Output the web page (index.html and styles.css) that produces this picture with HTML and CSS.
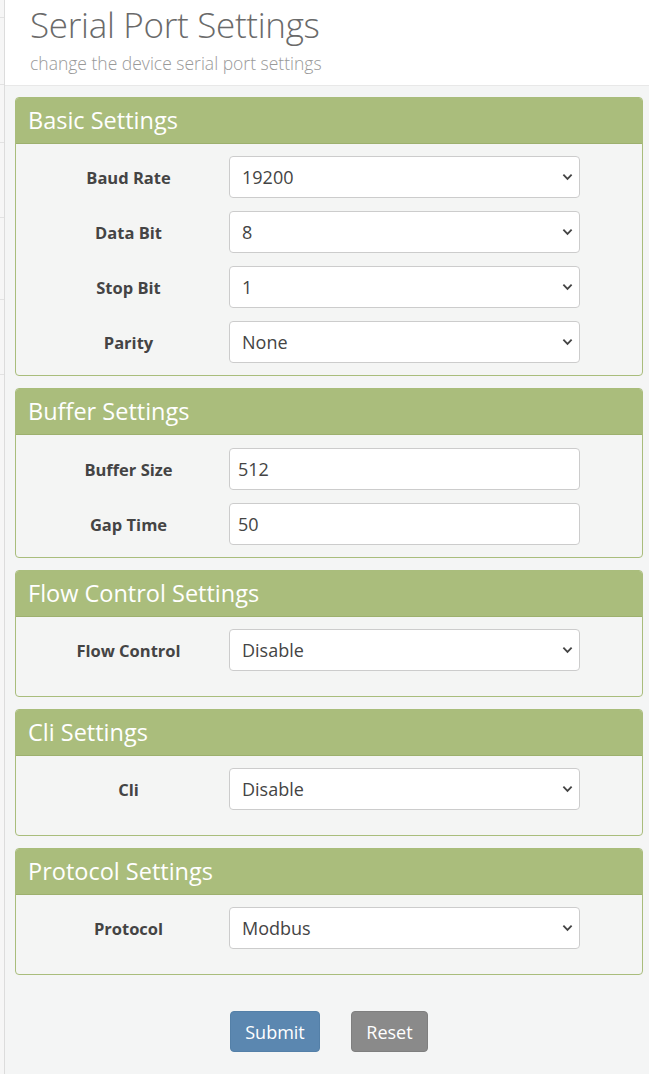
FILE: index.html
```html
<!DOCTYPE html>
<html lang="en">
<head>
<meta charset="utf-8">
<title>Serial Port Settings</title>
<link rel="stylesheet" href="styles.css">
</head>
<body>
<div class="layout">
  <aside class="sidebar">
    <div class="side-item s1"></div>
    <div class="side-item s2"></div>
    <div class="side-item s3"></div>
    <div class="side-item s4"></div>
    <div class="side-item s5"></div>
    <div class="side-item s6"></div>
  </aside>
  <main class="main">
    <header class="page-header">
      <h1 class="title">Serial Port Settings</h1>
      <p class="subtitle">change the device serial port settings</p>
    </header>
    <form class="content">
      <section class="panel">
        <h2 class="panel-heading">Basic Settings</h2>
        <div class="panel-body">
          <div class="row"><label class="label">Baud Rate</label><div class="select-wrap"><select class="control"><option>19200</option></select><svg class="chev" viewBox="0 0 12 8"><path d="M1.5 1.5 6 6 10.5 1.5"/></svg></div></div>
          <div class="row"><label class="label">Data Bit</label><div class="select-wrap"><select class="control"><option>8</option></select><svg class="chev" viewBox="0 0 12 8"><path d="M1.5 1.5 6 6 10.5 1.5"/></svg></div></div>
          <div class="row"><label class="label">Stop Bit</label><div class="select-wrap"><select class="control"><option>1</option></select><svg class="chev" viewBox="0 0 12 8"><path d="M1.5 1.5 6 6 10.5 1.5"/></svg></div></div>
          <div class="row"><label class="label">Parity</label><div class="select-wrap"><select class="control"><option>None</option></select><svg class="chev" viewBox="0 0 12 8"><path d="M1.5 1.5 6 6 10.5 1.5"/></svg></div></div>
        </div>
      </section>
      <section class="panel">
        <h2 class="panel-heading">Buffer Settings</h2>
        <div class="panel-body inputs">
          <div class="row"><label class="label">Buffer Size</label><input class="control input" type="text" value="512"></div>
          <div class="row"><label class="label">Gap Time</label><input class="control input" type="text" value="50"></div>
        </div>
      </section>
      <section class="panel">
        <h2 class="panel-heading">Flow Control Settings</h2>
        <div class="panel-body tall">
          <div class="row"><label class="label">Flow Control</label><div class="select-wrap"><select class="control"><option>Disable</option></select><svg class="chev" viewBox="0 0 12 8"><path d="M1.5 1.5 6 6 10.5 1.5"/></svg></div></div>
        </div>
      </section>
      <section class="panel">
        <h2 class="panel-heading">Cli Settings</h2>
        <div class="panel-body tall">
          <div class="row"><label class="label">Cli</label><div class="select-wrap"><select class="control"><option>Disable</option></select><svg class="chev" viewBox="0 0 12 8"><path d="M1.5 1.5 6 6 10.5 1.5"/></svg></div></div>
        </div>
      </section>
      <section class="panel">
        <h2 class="panel-heading">Protocol Settings</h2>
        <div class="panel-body tall">
          <div class="row"><label class="label">Protocol</label><div class="select-wrap"><select class="control"><option>Modbus</option></select><svg class="chev" viewBox="0 0 12 8"><path d="M1.5 1.5 6 6 10.5 1.5"/></svg></div></div>
        </div>
      </section>
      <div class="actions">
        <button type="button" class="btn btn-primary">Submit</button>
        <button type="button" class="btn btn-default">Reset</button>
      </div>
    </form>
  </main>
</div>
</body>
</html>
```
FILE: styles.css
```css
* { box-sizing: border-box; }
html, body { margin: 0; padding: 0; }
body {
  background: #f4f5f5;
  font-family: "Open Sans", "Noto Sans", sans-serif;
  color: #333;
}
.layout { display: flex; min-height: 1074px; }
.sidebar {
  width: 5px;
  flex: none;
  background: #f6f6f6;
  border-right: 1px solid #dcdcdc;
  display: flex;
  flex-direction: column;
}
.side-item { border-bottom: 1px solid #e2e2e2; }
.s1 { height: 18px; }
.s2 { height: 67px; }
.s3 { height: 58px; }
.s4 { height: 75px; }
.s5 { height: 82px; }
.s6 { height: 75px; }
.main { flex: 1; min-width: 0; }
.page-header {
  background: #fff;
  border-bottom: 1px solid #e8e8e8;
  padding: 3px 0 0 25px;
  height: 86px;
}
.title {
  margin: 0;
  font-size: 35px;
  font-weight: 300;
  line-height: 44px;
  color: #6a6a6a;
  letter-spacing: -0.3px;
}
.subtitle {
  margin: 4px 0 0 0;
  font-size: 17.5px;
  font-weight: 300;
  color: #999;
  line-height: 24px;
}
.content { padding: 11px 6px 0 10px; }
.panel {
  border: 1px solid #a9bd7c;
  border-radius: 4px;
  background: #f4f5f4;
  margin-bottom: 12px;
  overflow: hidden;
}
.panel-heading {
  margin: 0;
  background: #aabd7c;
  color: #fff;
  font-size: 23.5px;
  font-weight: 400;
  height: 46px;
  line-height: 44px;
  padding: 0 12px;
  border-bottom: 1px solid #9db06e;
}
.panel-body {
  padding: 12px 0 12px 0;
  display: flex;
  flex-direction: column;
  gap: 13px;
}
.panel-body.inputs { padding-top: 13px; }
.panel-body.tall { padding-bottom: 25px; }
.row { display: flex; align-items: center; }
.label {
  width: 213px;
  padding-left: 12px;
  text-align: center;
  font-weight: 700;
  font-size: 16.5px;
  color: #444;
}
.select-wrap { position: relative; width: 351px; }
.control {
  display: block;
  width: 351px;
  height: 42px;
  border: 1px solid #ccc;
  border-radius: 4px;
  background: #fff;
  font-family: inherit;
  font-size: 18px;
  color: #444;
  padding: 0 12px;
  appearance: none;
  -webkit-appearance: none;
  outline: none;
}
.input { padding: 0 8px; }
.chev {
  position: absolute;
  right: 7px;
  top: 17px;
  width: 11px;
  height: 8px;
  fill: none;
  stroke: #444;
  stroke-width: 2;
}
.actions {
  display: flex;
  gap: 31px;
  padding: 24px 0 0 215px;
}
.btn {
  height: 41px;
  border: 1px solid transparent;
  border-radius: 4px;
  color: #fff;
  font-family: inherit;
  font-size: 18px;
  padding: 0 10px;
}
.btn-primary { background: #5b87b0; border-color: #5480a8; width: 90px; }
.btn-default { background: #8a8a8a; border-color: #7f7f7f; width: 77px; }
```
